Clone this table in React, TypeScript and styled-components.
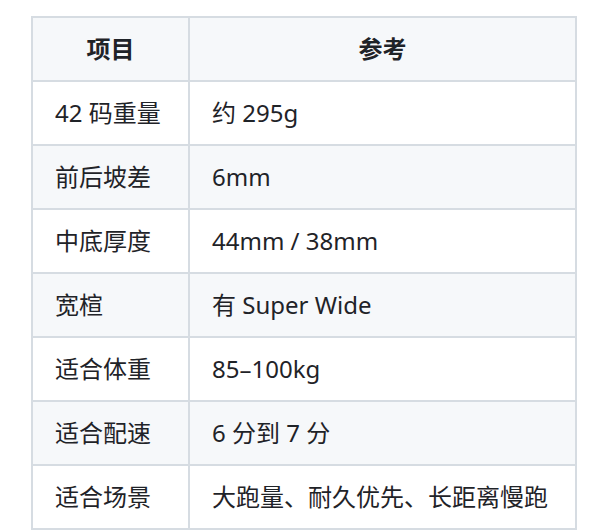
import React from 'react'
import styled, { createGlobalStyle } from 'styled-components'

const GlobalStyle = createGlobalStyle`
  html, body {
    margin: 0;
    padding: 0;
    background: #ffffff;
  }
  body {
    font-family: "Noto Sans", "Noto Sans CJK SC", sans-serif;
    color: #1f2328;
  }
`

const Page = styled.div`
  padding: 16px 0 0 31px;
`

const Table = styled.table`
  border-collapse: collapse;
  border-spacing: 0;
  width: 546px;
  font-size: 24px;
  line-height: 1.5;
`

const HeadCell = styled.th<{ $first?: boolean }>`
  width: ${props => (props.$first ? '157px' : 'auto')};
  height: 64px;
  padding: 0 22px;
  box-sizing: border-box;
  border: 2px solid #d6dce2;
  background: #f6f8fa;
  font-weight: 700;
  text-align: center;
`

const Row = styled.tr`
  background: #ffffff;

  &:nth-child(2n) {
    background: #f6f8fa;
  }
`

const Cell = styled.td`
  height: 64px;
  padding: 0 22px;
  box-sizing: border-box;
  border: 2px solid #d6dce2;
  text-align: left;
  white-space: nowrap;
`

const rows: [string, string][] = [
  ['42 码重量', '约 295g'],
  ['前后坡差', '6mm'],
  ['中底厚度', '44mm / 38mm'],
  ['宽楦', '有 Super Wide'],
  ['适合体重', '85–100kg'],
  ['适合配速', '6 分到 7 分'],
  ['适合场景', '大跑量、耐久优先、长距离慢跑'],
]

export default function App() {
  return (
    <>
      <GlobalStyle />
      <Page>
        <Table>
          <thead>
            <tr>
              <HeadCell $first>项目</HeadCell>
              <HeadCell>参考</HeadCell>
            </tr>
          </thead>
          <tbody>
            {rows.map(([name, value]) => (
              <Row key={name}>
                <Cell>{name}</Cell>
                <Cell>{value}</Cell>
              </Row>
            ))}
          </tbody>
        </Table>
      </Page>
    </>
  )
}
